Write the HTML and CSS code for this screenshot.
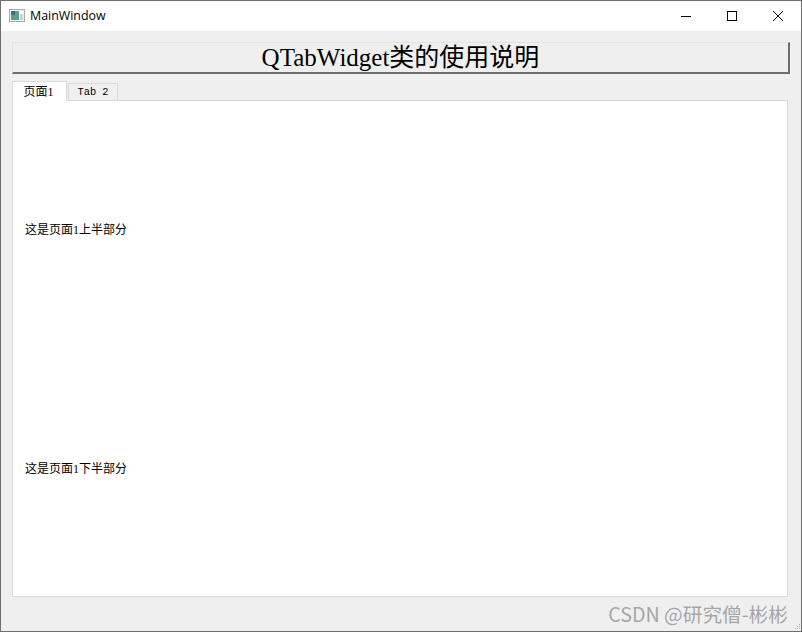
FILE: index.html
```html
<!DOCTYPE html>
<html lang="zh">
<head>
<meta charset="utf-8">
<title>MainWindow</title>
<link rel="stylesheet" href="styles.css">
</head>
<body>
<div class="window">
  <header class="titlebar">
    <svg class="app-icon" width="16" height="14" viewBox="0 0 16 14">
      <rect x="0.5" y="0.5" width="15" height="12" fill="#f0f0f0" stroke="#a9adb0"/>
      <rect x="2" y="2" width="8" height="9" fill="#5f9d94"/>
      <rect x="2" y="2" width="4" height="4" fill="#3f6f80"/>
      <rect x="11" y="2" width="3" height="3" fill="#fff"/>
      <rect x="11" y="5" width="3" height="6" fill="#c9d3d3"/>
    </svg>
    <span class="title">MainWindow</span>
    <div class="controls">
      <button class="ctl">
        <svg width="10" height="10" viewBox="0 0 10 10"><path d="M0 5.5H10" stroke="#000" stroke-width="1"/></svg>
      </button>
      <button class="ctl">
        <svg width="10" height="10" viewBox="0 0 10 10"><rect x="0.5" y="0.5" width="9" height="9" fill="none" stroke="#000"/></svg>
      </button>
      <button class="ctl">
        <svg width="10" height="10" viewBox="0 0 10 10"><path d="M0 0L10 10M10 0L0 10" stroke="#000" stroke-width="1"/></svg>
      </button>
    </div>
  </header>
  <main class="client">
    <button class="heading">QTabWidget类的使用说明</button>
    <div class="tabbar">
      <div class="tab active">页面1</div>
      <div class="tab">Tab 2</div>
    </div>
    <section class="pane">
      <div class="half"><span class="label">这是页面1上半部分</span></div>
      <div class="half"><span class="label">这是页面1下半部分</span></div>
    </section>
    <div class="watermark">CSDN @研究僧-彬彬</div>
    <svg class="grip" width="8" height="8" viewBox="0 0 8 8">
      <path d="M6 1h1v1H6zM4 3h1v1H4zM6 3h1v1H6zM2 5h1v1H2zM4 5h1v1H4zM6 5h1v1H6z" fill="#b5b5b5"/>
    </svg>
  </main>
</div>
</body>
</html>
```
FILE: styles.css
```css
* { box-sizing: border-box; }
html, body { margin: 0; padding: 0; }
body { width: 802px; height: 632px; overflow: hidden; background: #efefef; }
.window {
  width: 802px; height: 632px;
  border: 1px solid #6e6e6e;
  display: flex; flex-direction: column;
  background: #efefef;
}
.titlebar {
  height: 30px; flex: none; background: #fff;
  display: flex; align-items: center;
  padding-left: 8px;
}
.app-icon { flex: none; }
.title {
  margin-left: 5px;
  font: 12.4px "Open Sans", "Noto Sans", sans-serif;
  color: #000;
  position: relative; top: -1px;
}
.controls { margin-left: auto; display: flex; }
.ctl {
  width: 46px; height: 30px; padding: 0; border: 0; background: none;
  display: flex; align-items: center; justify-content: center;
}
.client {
  flex: 1; position: relative;
  padding: 11px 11px 0 11px;
  display: flex; flex-direction: column;
}
.heading {
  width: 778px; height: 32px; flex: none; padding: 0;
  background: #efefef;
  border-style: solid;
  border-color: #e3e3e3 #6e6e6e #6e6e6e #e3e3e3;
  border-width: 1px 2px 2px 1px;
  font: 25px "Liberation Serif", "Noto Sans CJK SC", serif;
  color: #000;
  line-height: 30px;
}
.tabbar {
  display: flex; align-items: flex-end;
  height: 20px; margin-top: 7px; flex: none;
  position: relative; z-index: 1;
  margin-bottom: -1px;
}
.tab {
  height: 18px; width: 50px; margin-left: 1px;
  background: #f0f0f0;
  border: 1px solid #d9d9d9;
  font: 10.4px "Liberation Mono", monospace;
  color: #000;
  text-align: center; line-height: 17px;
}
.tab.active {
  height: 20px; width: 55px; margin-left: 0;
  padding-right: 2px;
  background: #fff;
  border-bottom: 0;
  font: 12px "Liberation Serif", "Noto Sans CJK SC", serif;
  line-height: 20px;
}
.pane {
  width: 776px; height: 497px; flex: none;
  background: #fff;
  border: 1px solid #d9d9d9;
  display: flex; flex-direction: column;
  padding-left: 12px;
}
.half { display: flex; align-items: center; flex: none; }
.half:first-child { height: 256px; }
.half:last-child { height: 222px; }
.label { font: 12px "Liberation Serif", "Noto Sans CJK SC", serif; color: #000; }
.watermark {
  position: absolute; right: 13px; bottom: 3px;
  font: 19.7px "Noto Sans CJK SC", sans-serif;
  color: rgba(90,90,90,.5);
}
.grip { position: absolute; right: 0; bottom: 0; }
```
